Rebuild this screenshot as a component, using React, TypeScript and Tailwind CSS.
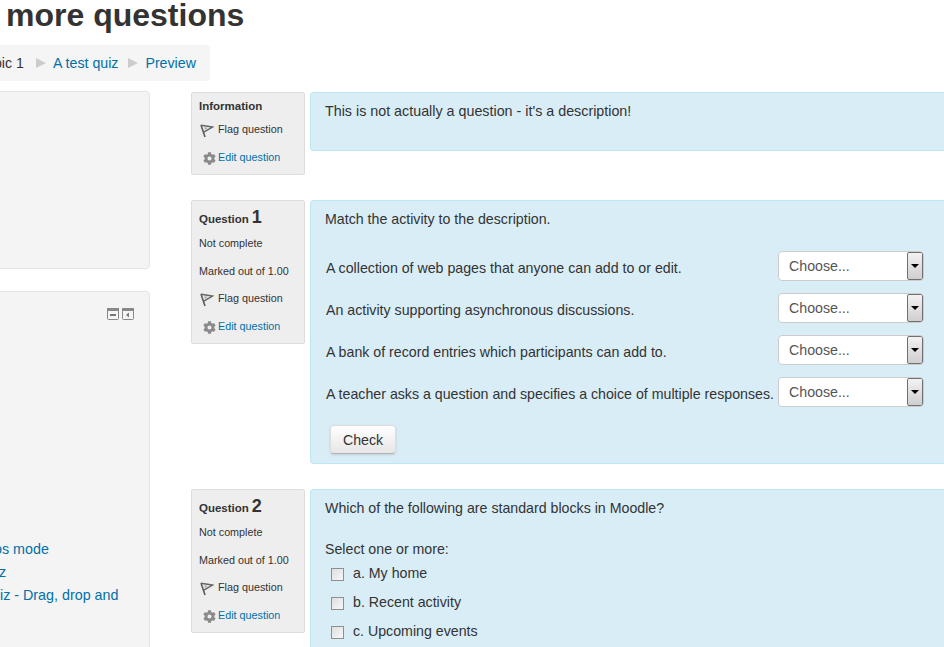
import React from "react";
import { FaCog } from "react-icons/fa";

const FlagIcon = () => (
  <svg width="14" height="14" viewBox="0 0 14 14" className="shrink-0">
    <path d="M1 1 L5 13" fill="none" stroke="#5c5c5c" strokeWidth="1.6" />
    <path d="M1 1.2 L12.5 3 L3.4 8.4" fill="none" stroke="#666666" strokeWidth="1.4" />
    <path d="M4.2 3.2 L8 3.8 L5 6 Z" fill="#aaaaaa" />
  </svg>
);

const InfoBox = ({ title, num, notes, className }: { title: string; num?: string; notes?: boolean; className: string }) => (
  <div className={`w-[114px] shrink-0 bg-[#eeeeee] border border-[#dddddd] rounded-[2px] pl-[7px] text-[10.78px] leading-[14px] text-[#333333] ${className}`}>
    {num ? (
      <div className="h-[20px] mt-[6px] flex items-baseline font-bold text-[11.5px] text-[#333333]">
        <span>{title}</span>
        <span className="ml-[3px] text-[18px] leading-[20px]">{num}</span>
      </div>
    ) : (
      <div className="h-[14px] mt-[6px] font-bold text-[11.5px]">{title}</div>
    )}
    {notes && (
      <>
        <div className="mt-[9px] h-[14px]">Not complete</div>
        <div className="mt-[14px] h-[14px]">Marked out of 1.00</div>
      </>
    )}
    <div className={`${notes ? "mt-[13px]" : "mt-[9px]"} h-[14px] flex items-start`}>
      <span className="ml-[1px] mt-[2px] w-[18px] shrink-0"><FlagIcon /></span>
      <span>Flag question</span>
    </div>
    <div className="mt-[14px] h-[14px] flex items-center">
      <span className="ml-[4px] w-[15px] shrink-0 mt-[2px]"><FaCog size={13} color="#8a8a8a" /></span>
      <a className="text-[#0070a8]">Edit question</a>
    </div>
  </div>
);

const matches = [
  "A collection of web pages that anyone can add to or edit.",
  "An activity supporting asynchronous discussions.",
  "A bank of record entries which participants can add to.",
  "A teacher asks a question and specifies a choice of multiple responses.",
];

const SelectBox = () => (
  <div className="w-[146px] h-[30px] shrink-0 bg-white border border-[#cccccc] rounded-[4px] flex items-stretch overflow-hidden">
    <span className="flex-1 pl-[10px] leading-[29px] text-[#555555]">Choose...</span>
    <span className="w-[16px] flex items-center justify-center border border-[#707070] rounded-[2px] bg-gradient-to-b from-[#f2f2f2] to-[#cfcfcf]">
      <span className="w-0 h-0 border-x-[4px] border-x-transparent border-t-[4px] border-t-black" />
    </span>
  </div>
);

const Check = ({ label }: { label: string }) => (
  <div className="flex items-center h-[29px] pl-[6px]">
    <span className="w-[13px] h-[13px] border border-[#8f8f8f] bg-gradient-to-br from-[#dedede] to-[#f8f8f8] shrink-0 mt-[3px]" />
    <span className="ml-[9px]">{label}</span>
  </div>
);

export default function App() {
  return (
    <div className="w-[944px] h-[647px] overflow-hidden bg-white text-[14.2px] leading-[20px] text-[#333333] font-['Liberation_Sans',Arial,sans-serif]">
      <h1 className="ml-[6px] -mt-[1px] text-[32px] leading-[32px] font-bold text-[#333333] whitespace-nowrap">more questions</h1>

      <div className="mt-[14px] w-[210px] h-[36px] bg-[#f5f5f5] rounded-r-[4px] flex items-center whitespace-nowrap">
        <span className="-ml-[21px]">Topic 1</span>
        <span className="ml-[12px] w-0 h-0 border-y-[5px] border-y-transparent border-l-[10px] border-l-[#cccccc]" />
        <a className="ml-[7px] text-[#0070a8]">A test quiz</a>
        <span className="ml-[10px] w-0 h-0 border-y-[5px] border-y-transparent border-l-[10px] border-l-[#cccccc]" />
        <a className="ml-[7px] text-[#0070a8]">Preview</a>
      </div>

      <div className="mt-[11px] flex items-start">
        {/* left blocks */}
        <div className="w-[150px] shrink-0 -mt-[1px]">
          <div className="h-[178px] bg-[#f4f4f4] border border-l-0 border-[#e5e5e5] rounded-r-[4px]" />
          <div className="mt-[22px] h-[400px] bg-[#f4f4f4] border border-l-0 border-[#e5e5e5] rounded-r-[4px] text-[14.3px] text-[#0070a8] whitespace-nowrap">
            <div className="h-[14px] mt-[16px] flex justify-end gap-[3px] pr-[15px]">
              <svg width="12" height="12" viewBox="0 0 12 12">
                <rect x="0.5" y="0.5" width="11" height="11" rx="1" fill="#f4f4f4" stroke="#888" />
                <rect x="0" y="0" width="12" height="3" fill="#888" />
                <rect x="3" y="6" width="6" height="2" fill="#777" />
              </svg>
              <svg width="12" height="12" viewBox="0 0 12 12">
                <rect x="0.5" y="0.5" width="11" height="11" rx="1" fill="#f4f4f4" stroke="#888" />
                <rect x="0" y="0" width="12" height="3" fill="#888" />
                <path d="M7 4.5 L4 7 L7 9.5 Z" fill="#777" />
              </svg>
            </div>
            <div className="mt-[217px] h-[23px] -ml-[6px]">os mode</div>
            <div className="h-[23px] -ml-[1px]">z</div>
            <div className="h-[23px]">iz - Drag, drop and</div>
          </div>
        </div>

        {/* questions */}
        <div className="ml-[41px] flex-1 min-w-0">
          <div className="flex gap-[5px] items-start">
            <InfoBox title="Information" className="h-[83px]" />
            <div className="flex-1 h-[59px] bg-[#d9edf7] border border-[#bce8f1] border-r-0 rounded-l-[4px] pl-[14px] pt-[8px] text-[14.3px]">
              This is not actually a question - it's a description!
            </div>
          </div>

          <div className="mt-[25px] flex gap-[5px] items-start">
            <InfoBox title="Question" num="1" notes className="h-[144px]" />
            <div className="flex-1 h-[264px] bg-[#d9edf7] border border-[#bce8f1] border-r-0 rounded-l-[4px] pl-[14px] pt-[8px]">
              <div>Match the activity to the description.</div>
              <div className="mt-[22px] flex flex-col gap-[12px]">
                {matches.map((m) => (
                  <div key={m} className="flex items-start pl-[1px]">
                    <span className="w-[452px] shrink-0 pt-[7px] whitespace-nowrap">{m}</span>
                    <SelectBox />
                  </div>
                ))}
              </div>
              <button className="mt-[18px] ml-[5px] w-[66px] h-[29px] bg-gradient-to-b from-white to-[#e6e6e6] border border-[#dddddd] border-b-[#b3b3b3] rounded-[4px] shadow-sm text-[#333333]">
                Check
              </button>
            </div>
          </div>

          <div className="mt-[25px] flex gap-[5px] items-start">
            <InfoBox title="Question" num="2" notes className="h-[144px]" />
            <div className="flex-1 h-[300px] bg-[#d9edf7] border border-[#bce8f1] border-r-0 rounded-l-[4px] pl-[14px] pt-[8px]">
              <div>Which of the following are standard blocks in Moodle?</div>
              <div className="mt-[21px]">Select one or more:</div>
              <div className="-mt-[1px]">
                <Check label="a. My home" />
                <Check label="b. Recent activity" />
                <Check label="c. Upcoming events" />
              </div>
            </div>
          </div>
        </div>
      </div>
    </div>
  );
}
